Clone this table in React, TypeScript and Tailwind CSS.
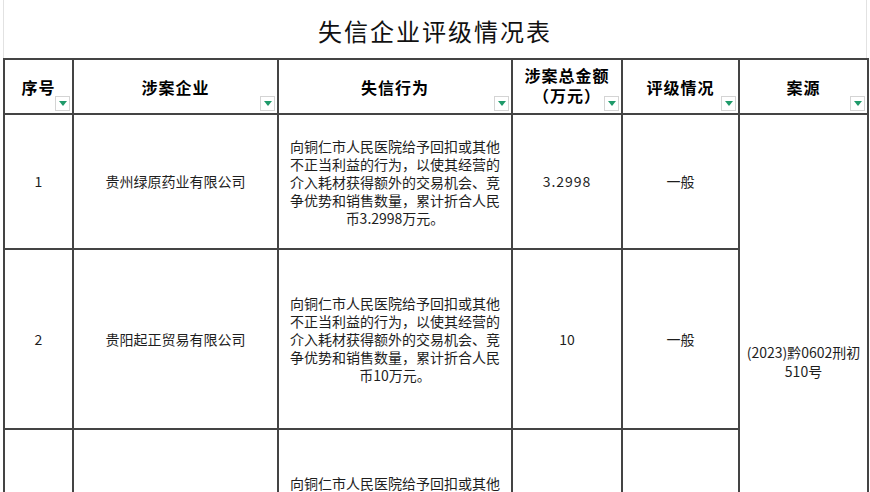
import React from "react";

const font = { fontFamily: '"Noto Sans CJK SC", "Noto Sans", sans-serif' };

function Filter() {
  return (
    <span className="absolute right-[2px] bottom-[2px] w-[15px] h-[15px] bg-white border border-[#d4d4d4] flex items-center justify-center">
      <svg width="8" height="5" viewBox="0 0 8 5">
        <polygon points="0,0 8,0 4,5" fill="#1f9a6a" />
      </svg>
    </span>
  );
}

const behavior = (amount: string) => [
  "向铜仁市人民医院给予回扣或其他",
  "不正当利益的行为，以使其经营的",
  "介入耗材获得额外的交易机会、竞",
  "争优势和销售数量，累计折合人民",
  `币${amount}万元。`,
];

function Behavior({ amount }: { amount: string }) {
  return (
    <div className="flex flex-col items-center leading-[18px]">
      {behavior(amount).map((l, i) => (
        <span key={i} className="whitespace-nowrap h-[18px]">{l}</span>
      ))}
    </div>
  );
}

export default function App() {
  const th = "relative border-2 border-[#444] text-center align-middle font-bold text-[16px] text-black p-0";
  const td = "border-2 border-[#444] text-center align-middle text-[14px] text-[#1e1e1e] p-0";
  return (
    <div className="w-[870px] h-[492px] bg-white overflow-hidden relative" style={font}>
      <div className="h-[58px] mx-[3px] border-x border-[#e2e2e2] flex items-center justify-center">
        <span className="text-[24px] font-normal text-[#111] tracking-[2px] mt-[4px]">失信企业评级情况表</span>
      </div>
      <table className="table-fixed border-collapse ml-[3px]" style={{ width: 864 }}>
        <colgroup>
          <col style={{ width: 69 }} />
          <col style={{ width: 205 }} />
          <col style={{ width: 234 }} />
          <col style={{ width: 110 }} />
          <col style={{ width: 117 }} />
          <col style={{ width: 129 }} />
        </colgroup>
        <tbody>
          <tr className="h-[55px]">
            <td className={th}><span className="tracking-[1px]">序号</span><Filter /></td>
            <td className={th}><span className="tracking-[1px]">涉案企业</span><Filter /></td>
            <td className={th}><span className="tracking-[1px]">失信行为</span><Filter /></td>
            <td className={th}>
              <div className="leading-[20px] tracking-[1px] -mt-[4px]">涉案总金额<br />（万元）</div>
              <Filter />
            </td>
            <td className={th}><span className="tracking-[1px]">评级情况</span><Filter /></td>
            <td className={th}><span className="tracking-[1px]">案源</span><Filter /></td>
          </tr>
          <tr className="h-[135px]">
            <td className={td}>1</td>
            <td className={td}>贵州绿原药业有限公司</td>
            <td className={td}><Behavior amount="3.2998" /></td>
            <td className={td}><span className="tracking-[1px]">3.2998</span></td>
            <td className={td}>一般</td>
            <td className={td + " leading-[19px]"} rowSpan={3}>(2023)黔0602刑初<br />510号</td>
          </tr>
          <tr className="h-[180px]">
            <td className={td}>2</td>
            <td className={td}>贵阳起正贸易有限公司</td>
            <td className={td}><Behavior amount="10" /></td>
            <td className={td}>10</td>
            <td className={td}>一般</td>
          </tr>
          <tr className="h-[180px]">
            <td className={td}></td>
            <td className={td}></td>
            <td className={td}><Behavior amount="10" /></td>
            <td className={td}></td>
            <td className={td}></td>
          </tr>
        </tbody>
      </table>
    </div>
  );
}
